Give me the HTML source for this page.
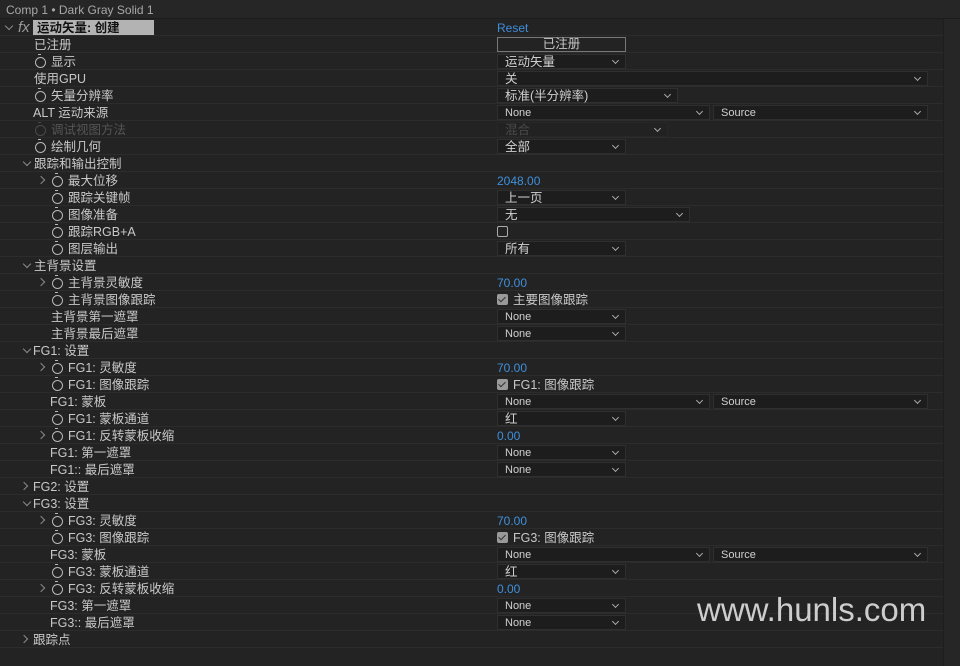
<!DOCTYPE html>
<html><head><meta charset="utf-8"><style>
*{margin:0;padding:0;box-sizing:border-box}
body{width:960px;height:666px;background:#232323;overflow:hidden;position:relative;font-family:"Liberation Sans","Noto Sans CJK SC",sans-serif;color:#c8c8c8;font-size:12.5px}
.hd{position:absolute;left:0;top:0;width:960px;height:19px;background:#262626;border-bottom:1px solid #1c1c1c;color:#a8a8a8;font-size:12px;line-height:21px;padding-left:6px}
.side{position:absolute;left:943px;top:19px;width:17px;height:647px;background:#262626;border-left:1px solid #1d1d1d}
.r{position:absolute;left:0;width:943px;height:17px;border-bottom:1px solid #2c2c2c}
.r>*{position:absolute}
.t{top:1px;line-height:16px;white-space:nowrap}
.sw{top:4px;width:11px;height:11px;border:1.5px solid #b8b8b8;border-radius:50%}
.sw:before{content:"";position:absolute;left:2px;top:-4px;width:3px;height:2px;border-top:1.5px solid #b8b8b8}
.dis{color:#555}.sw.dis{border-color:#4a4a4a}.sw.dis:before{border-color:#4a4a4a}
.tw{top:5px;width:6px;height:6px;border-right:1.3px solid #8a8a8a;border-bottom:1.3px solid #8a8a8a}
.open{transform:rotate(45deg);top:4px}
.cl{transform:rotate(-45deg)}
.dd{top:1px;height:15px;background:#1d1d1d;border:1px solid #2f2f2f;padding-left:7px;line-height:14px;font-size:12.5px;color:#d0d0d0}
.dd.e{font-size:11px}
.dd:after{content:"";position:absolute;right:7px;top:3px;width:4px;height:4px;border-right:1.2px solid #aaa;border-bottom:1.2px solid #aaa;transform:rotate(45deg)}
.num{top:1px;line-height:16px;color:#3f8fdc;font-size:12px}
.cb{top:3px;width:11px;height:11px;border:1.5px solid #aaa;border-radius:2px}
.cbk{top:3px;width:11px;height:11px;background:#9a9a9a;border-radius:2px}
.cbk:after{content:"";position:absolute;left:3px;top:1px;width:3px;height:6px;border-right:1.5px solid #333;border-bottom:1.5px solid #333;transform:rotate(45deg)}
.wm{position:absolute;left:697px;top:592px;font-size:33px;line-height:36px;color:#cdcdcd;font-family:"Liberation Sans",sans-serif}
</style></head><body>
<div class="hd">Comp 1 • Dark Gray Solid 1</div>
<div class="side"></div>

<div class="r" style="top:19px"><span class="tw open" style="left:6px"></span><span class="t" style="left:18px;font-style:italic;color:#999;font-size:15px">fx</span><span style="left:33px;top:1px;width:121px;height:15px;background:#b3b3b3;color:#111;font-weight:bold;line-height:16px;padding-left:4px">运动矢量: 创建</span><span class="t" style="left:497px;color:#3f8fdc;font-size:12px">Reset</span></div>
<div class="r" style="top:36px"><span class="t" style="left:34px">已注册</span><span style="left:497px;top:1px;width:129px;height:15px;border:1.5px solid #777;text-align:center;line-height:13px">已注册</span></div>
<div class="r" style="top:53px"><span class="sw" style="left:35px"></span><span class="t" style="left:51px">显示</span><span class="dd" style="left:497px;width:129px">运动矢量</span></div>
<div class="r" style="top:70px"><span class="t" style="left:34px">使用GPU</span><span class="dd" style="left:497px;width:431px">关</span></div>
<div class="r" style="top:87px"><span class="sw" style="left:35px"></span><span class="t" style="left:51px">矢量分辨率</span><span class="dd" style="left:497px;width:181px">标准(半分辨率)</span></div>
<div class="r" style="top:104px"><span class="t" style="left:33px">ALT 运动来源</span><span class="dd e" style="left:497px;width:213px">None</span><span class="dd e" style="left:713px;width:215px">Source</span></div>
<div class="r" style="top:121px"><span class="sw dis" style="left:35px"></span><span class="t dis" style="left:51px">调试视图方法</span><span class="dd dis" style="left:497px;width:171px;background:#222;border-color:#272727;color:#4a4a4a">混合</span></div>
<div class="r" style="top:138px"><span class="sw" style="left:35px"></span><span class="t" style="left:51px">绘制几何</span><span class="dd" style="left:497px;width:129px">全部</span></div>
<div class="r" style="top:155px"><span class="tw open" style="left:24px"></span><span class="t" style="left:34px">跟踪和输出控制</span></div>
<div class="r" style="top:172px"><span class="tw cl" style="left:38px"></span><span class="sw" style="left:52px"></span><span class="t" style="left:68px">最大位移</span><span class="num" style="left:497px">2048.00</span></div>
<div class="r" style="top:189px"><span class="sw" style="left:52px"></span><span class="t" style="left:68px">跟踪关键帧</span><span class="dd" style="left:497px;width:129px">上一页</span></div>
<div class="r" style="top:206px"><span class="sw" style="left:52px"></span><span class="t" style="left:68px">图像准备</span><span class="dd" style="left:497px;width:193px">无</span></div>
<div class="r" style="top:223px"><span class="sw" style="left:52px"></span><span class="t" style="left:68px">跟踪RGB+A</span><span class="cb" style="left:497px"></span></div>
<div class="r" style="top:240px"><span class="sw" style="left:52px"></span><span class="t" style="left:68px">图层输出</span><span class="dd" style="left:497px;width:129px">所有</span></div>
<div class="r" style="top:257px"><span class="tw open" style="left:24px"></span><span class="t" style="left:34px">主背景设置</span></div>
<div class="r" style="top:274px"><span class="tw cl" style="left:38px"></span><span class="sw" style="left:52px"></span><span class="t" style="left:68px">主背景灵敏度</span><span class="num" style="left:497px">70.00</span></div>
<div class="r" style="top:291px"><span class="sw" style="left:52px"></span><span class="t" style="left:68px">主背景图像跟踪</span><span class="cbk" style="left:497px"></span><span class="t" style="left:513px">主要图像跟踪</span></div>
<div class="r" style="top:308px"><span class="t" style="left:51px">主背景第一遮罩</span><span class="dd e" style="left:497px;width:129px">None</span></div>
<div class="r" style="top:325px"><span class="t" style="left:51px">主背景最后遮罩</span><span class="dd e" style="left:497px;width:129px">None</span></div>
<div class="r" style="top:342px"><span class="tw open" style="left:24px"></span><span class="t" style="left:33px">FG1: 设置</span></div>
<div class="r" style="top:359px"><span class="tw cl" style="left:38px"></span><span class="sw" style="left:52px"></span><span class="t" style="left:68px">FG1: 灵敏度</span><span class="num" style="left:497px">70.00</span></div>
<div class="r" style="top:376px"><span class="sw" style="left:52px"></span><span class="t" style="left:68px">FG1: 图像跟踪</span><span class="cbk" style="left:497px"></span><span class="t" style="left:513px">FG1: 图像跟踪</span></div>
<div class="r" style="top:393px"><span class="t" style="left:50px">FG1: 蒙板</span><span class="dd e" style="left:497px;width:213px">None</span><span class="dd e" style="left:713px;width:215px">Source</span></div>
<div class="r" style="top:410px"><span class="sw" style="left:52px"></span><span class="t" style="left:68px">FG1: 蒙板通道</span><span class="dd" style="left:497px;width:129px">红</span></div>
<div class="r" style="top:427px"><span class="tw cl" style="left:38px"></span><span class="sw" style="left:52px"></span><span class="t" style="left:68px">FG1: 反转蒙板收缩</span><span class="num" style="left:497px">0.00</span></div>
<div class="r" style="top:444px"><span class="t" style="left:50px">FG1: 第一遮罩</span><span class="dd e" style="left:497px;width:129px">None</span></div>
<div class="r" style="top:461px"><span class="t" style="left:50px">FG1:: 最后遮罩</span><span class="dd e" style="left:497px;width:129px">None</span></div>
<div class="r" style="top:478px"><span class="tw cl" style="left:21px"></span><span class="t" style="left:33px">FG2: 设置</span></div>
<div class="r" style="top:495px"><span class="tw open" style="left:24px"></span><span class="t" style="left:33px">FG3: 设置</span></div>
<div class="r" style="top:512px"><span class="tw cl" style="left:38px"></span><span class="sw" style="left:52px"></span><span class="t" style="left:68px">FG3: 灵敏度</span><span class="num" style="left:497px">70.00</span></div>
<div class="r" style="top:529px"><span class="sw" style="left:52px"></span><span class="t" style="left:68px">FG3: 图像跟踪</span><span class="cbk" style="left:497px"></span><span class="t" style="left:513px">FG3: 图像跟踪</span></div>
<div class="r" style="top:546px"><span class="t" style="left:50px">FG3: 蒙板</span><span class="dd e" style="left:497px;width:213px">None</span><span class="dd e" style="left:713px;width:215px">Source</span></div>
<div class="r" style="top:563px"><span class="sw" style="left:52px"></span><span class="t" style="left:68px">FG3: 蒙板通道</span><span class="dd" style="left:497px;width:129px">红</span></div>
<div class="r" style="top:580px"><span class="tw cl" style="left:38px"></span><span class="sw" style="left:52px"></span><span class="t" style="left:68px">FG3: 反转蒙板收缩</span><span class="num" style="left:497px">0.00</span></div>
<div class="r" style="top:597px"><span class="t" style="left:50px">FG3: 第一遮罩</span><span class="dd e" style="left:497px;width:129px">None</span></div>
<div class="r" style="top:614px"><span class="t" style="left:50px">FG3:: 最后遮罩</span><span class="dd e" style="left:497px;width:129px">None</span></div>
<div class="r" style="top:631px"><span class="tw cl" style="left:21px"></span><span class="t" style="left:33px">跟踪点</span></div>

<div class="wm">www.hunls.com</div>
</body></html>
